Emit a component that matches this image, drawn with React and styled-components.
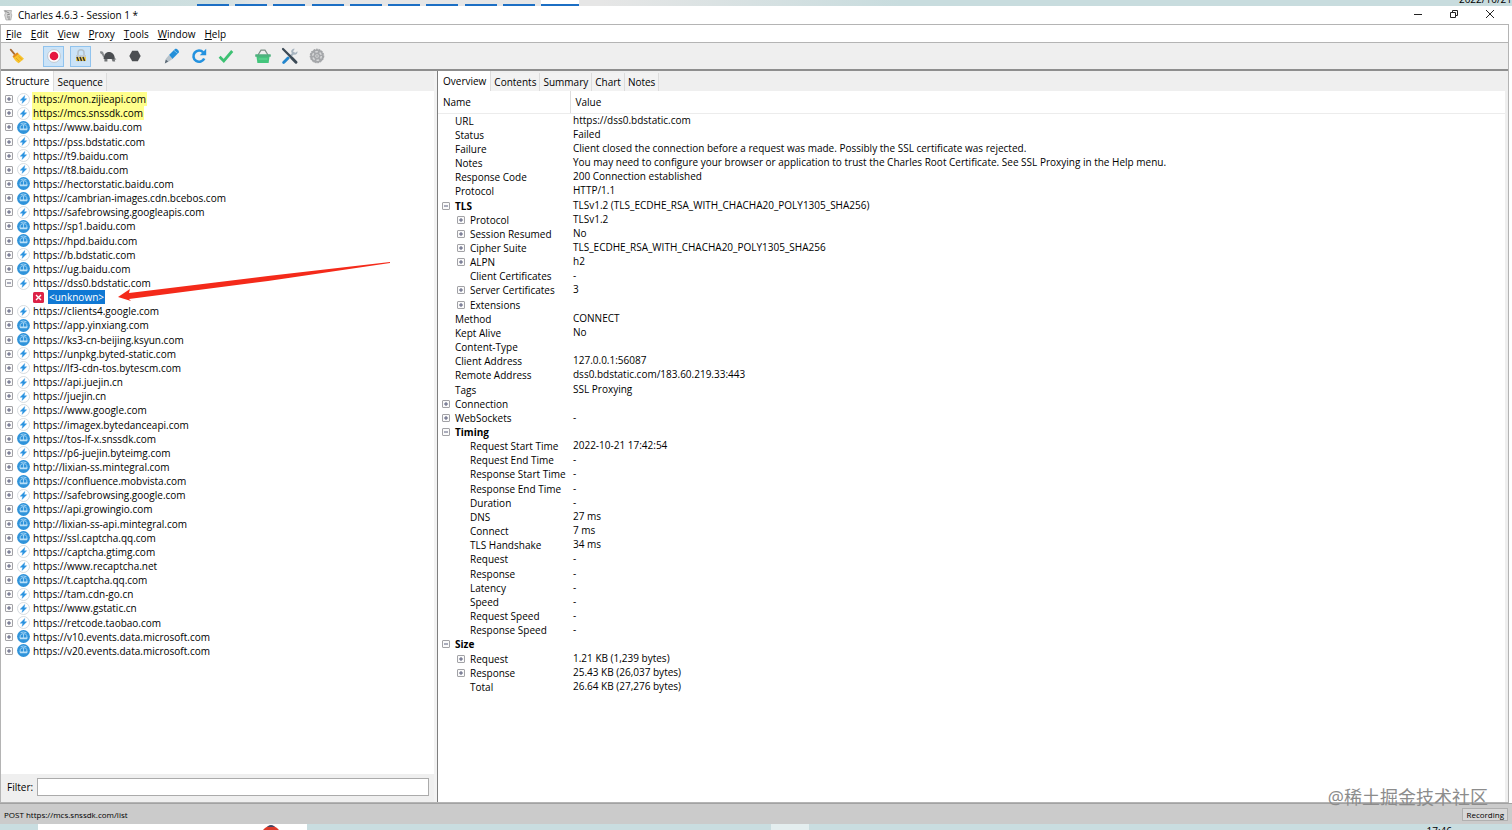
import React from 'react';
import styled, { createGlobalStyle } from 'styled-components';

const GlobalStyle = createGlobalStyle`
  * {
    box-sizing: border-box;
  }
  html, body, #root {
    height: 100%;
    margin: 0;
  }
  body {
    overflow: hidden;
    font-family: 'Open Sans', 'Noto Sans CJK SC', sans-serif;
    font-size: 10px;
    color: #000;
  }
  button, input {
    font: inherit;
    color: inherit;
  }
`;

const hosts = [
  { url: 'https://mon.zijieapi.com', marked: true },
  { url: 'https://mcs.snssdk.com', marked: true },
  { url: 'https://www.baidu.com', globe: true },
  { url: 'https://pss.bdstatic.com' },
  { url: 'https://t9.baidu.com' },
  { url: 'https://t8.baidu.com' },
  { url: 'https://hectorstatic.baidu.com', globe: true },
  { url: 'https://cambrian-images.cdn.bcebos.com', globe: true },
  { url: 'https://safebrowsing.googleapis.com' },
  { url: 'https://sp1.baidu.com', globe: true },
  { url: 'https://hpd.baidu.com', globe: true },
  { url: 'https://b.bdstatic.com' },
  { url: 'https://ug.baidu.com', globe: true },
  { url: 'https://dss0.bdstatic.com', open: true },
  { url: '<unknown>', failed: true },
  { url: 'https://clients4.google.com' },
  { url: 'https://app.yinxiang.com', globe: true },
  { url: 'https://ks3-cn-beijing.ksyun.com', globe: true },
  { url: 'https://unpkg.byted-static.com' },
  { url: 'https://lf3-cdn-tos.bytescm.com' },
  { url: 'https://api.juejin.cn' },
  { url: 'https://juejin.cn' },
  { url: 'https://www.google.com' },
  { url: 'https://imagex.bytedanceapi.com' },
  { url: 'https://tos-lf-x.snssdk.com', globe: true },
  { url: 'https://p6-juejin.byteimg.com' },
  { url: 'http://lixian-ss.mintegral.com', globe: true },
  { url: 'https://confluence.mobvista.com', globe: true },
  { url: 'https://safebrowsing.google.com' },
  { url: 'https://api.growingio.com', globe: true },
  { url: 'http://lixian-ss-api.mintegral.com', globe: true },
  { url: 'https://ssl.captcha.qq.com', globe: true },
  { url: 'https://captcha.gtimg.com' },
  { url: 'https://www.recaptcha.net' },
  { url: 'https://t.captcha.qq.com', globe: true },
  { url: 'https://tam.cdn-go.cn' },
  { url: 'https://www.gstatic.cn' },
  { url: 'https://retcode.taobao.com' },
  { url: 'https://v10.events.data.microsoft.com', globe: true },
  { url: 'https://v20.events.data.microsoft.com', globe: true },
];

// [level, toggle, name, value]
const details = [
  [0, '', 'URL', 'https://dss0.bdstatic.com'],
  [0, '', 'Status', 'Failed'],
  [0, '', 'Failure', 'Client closed the connection before a request was made. Possibly the SSL certificate was rejected.'],
  [0, '', 'Notes', 'You may need to configure your browser or application to trust the Charles Root Certificate. See SSL Proxying in the Help menu.'],
  [0, '', 'Response Code', '200 Connection established'],
  [0, '', 'Protocol', 'HTTP/1.1'],
  [0, '-', 'TLS', 'TLSv1.2 (TLS_ECDHE_RSA_WITH_CHACHA20_POLY1305_SHA256)'],
  [1, '+', 'Protocol', 'TLSv1.2'],
  [1, '+', 'Session Resumed', 'No'],
  [1, '+', 'Cipher Suite', 'TLS_ECDHE_RSA_WITH_CHACHA20_POLY1305_SHA256'],
  [1, '+', 'ALPN', 'h2'],
  [1, '', 'Client Certificates', '-'],
  [1, '+', 'Server Certificates', '3'],
  [1, '+', 'Extensions', ''],
  [0, '', 'Method', 'CONNECT'],
  [0, '', 'Kept Alive', 'No'],
  [0, '', 'Content-Type', ''],
  [0, '', 'Client Address', '127.0.0.1:56087'],
  [0, '', 'Remote Address', 'dss0.bdstatic.com/183.60.219.33:443'],
  [0, '', 'Tags', 'SSL Proxying'],
  [0, '+', 'Connection', ''],
  [0, '+', 'WebSockets', '-'],
  [0, '-', 'Timing', ''],
  [1, '', 'Request Start Time', '2022-10-21 17:42:54'],
  [1, '', 'Request End Time', '-'],
  [1, '', 'Response Start Time', '-'],
  [1, '', 'Response End Time', '-'],
  [1, '', 'Duration', '-'],
  [1, '', 'DNS', '27 ms'],
  [1, '', 'Connect', '7 ms'],
  [1, '', 'TLS Handshake', '34 ms'],
  [1, '', 'Request', '-'],
  [1, '', 'Response', '-'],
  [1, '', 'Latency', '-'],
  [1, '', 'Speed', '-'],
  [1, '', 'Request Speed', '-'],
  [1, '', 'Response Speed', '-'],
  [0, '-', 'Size', ''],
  [1, '+', 'Request', '1.21 KB (1,239 bytes)'],
  [1, '+', 'Response', '25.43 KB (26,037 bytes)'],
  [1, '', 'Total', '26.64 KB (27,276 bytes)'],
];

const menus = ['File', 'Edit', 'View', 'Proxy', 'Tools', 'Window', 'Help'];
const infoTabs = ['Overview', 'Contents', 'Summary', 'Chart', 'Notes'];

const BoltIcon = () => (
  <svg width="13" height="13" viewBox="0 0 13 13">
    <circle cx="6.5" cy="6.5" r="6" fill="#fff" stroke="#cdd3d8" strokeWidth="0.8" />
    <path d="M7.8 2.6 3.2 7.2h2.5l-.6 3.2 4.6-4.7H7.2z" fill="#2b93e0" stroke="#2b93e0" strokeWidth="0.4" />
  </svg>
);

const GlobeIcon = () => (
  <svg width="13" height="13" viewBox="0 0 13 13">
    <circle cx="6.5" cy="6.5" r="6.4" fill="#2f93da" />
    <path d="M3.6 2.6 6.5 2l3 .8M3.2 8V5.4L5 3.8h3.4l1.4 1.8V8M6.5 4v4.4" fill="none" stroke="#a9d7f5" strokeWidth="0.9" />
    <path d="M2.4 7.4h8.4l-.8 1.8H3.2z" fill="#b9dff7" />
  </svg>
);

const FailedIcon = () => (
  <svg width="11" height="11" viewBox="0 0 11 11">
    <rect width="11" height="11" rx="1.5" fill="#dc2347" />
    <path d="m3 3 5 5M8 3 3 8" stroke="#fff" strokeWidth="1.4" />
  </svg>
);

const ToggleIcon = ({ open }) => (
  <svg width="8" height="8" viewBox="0 0 8 8">
    <rect x="0.5" y="0.5" width="7" height="7" rx="0.5" fill="#fafafa" stroke="#a2a2a6" />
    <path d={open ? 'M2 4h4' : 'M2 4h4M4 2v4'} stroke="#4b4f70" strokeWidth="0.9" />
  </svg>
);

const JarIcon = () => (
  <svg width="10" height="12" viewBox="0 0 10 12">
    <path d="M1 1.5h7.5L8 4l.8 2-1 5H3L1.6 6 2.5 4z" fill="#d4d4d4" stroke="#a4a4a4" strokeWidth="0.7" />
    <path d="m2 2 4 2M4 6l3-1M4 8h3M5 10h2" stroke="#777" strokeWidth="0.8" />
  </svg>
);

const BroomIcon = () => (
  <svg width="18" height="18" viewBox="0 0 18 18">
    <path d="m2.7 2.6 4.4 5.2" stroke="#a86d35" strokeWidth="1.8" strokeLinecap="round" />
    <path d="m4.6 9.2 4.6-3.6 6.8 6.2-5.4 4.4c-2.2-1.6-4.6-3.6-6-7z" fill="#f8c32d" />
    <path d="m4.6 9.2 4.6-3.6 1.4 1.3-4.8 3.8z" fill="#e58b1f" />
    <path d="m8 11 3.6 3.6M10.4 9.2l3.8 3.6" stroke="#dea21b" strokeWidth="0.8" />
  </svg>
);

const RecordIcon = () => (
  <svg width="18" height="18" viewBox="0 0 18 18">
    <circle cx="9" cy="9" r="6.4" fill="#fff" stroke="#b6bcc4" strokeWidth="0.8" />
    <circle cx="9" cy="9" r="4.3" fill="#e6173f" />
  </svg>
);

const LockIcon = () => (
  <svg width="18" height="18" viewBox="0 0 18 18">
    <path d="M6 8V5.8a3 3 0 0 1 6 0V8" fill="none" stroke="#b3c0ca" strokeWidth="1.5" />
    <rect x="4" y="8" width="10" height="2" fill="#c3ccd2" />
    <rect x="4" y="10" width="10" height="4" fill="#f0cd4e" />
    <path d="m5 10 1.6 4M8 10l1.6 4M11 10l1.6 4" stroke="#333" strokeWidth="1.5" />
  </svg>
);

const TurtleIcon = () => (
  <svg width="18" height="18" viewBox="0 0 18 18">
    <path d="M4.6 12c0-4.6 2.4-7 5.4-7s5.8 2.4 5.8 7z" fill="#4b4e51" />
    <path d="M1 4.6c1.6-1 3.4 0 3.4 1.4l1.2 2.4-1.2 2L2.8 7.2C1.8 7.2.8 6 1 4.6z" fill="#888b8d" />
    <path d="M5.4 12h3v2.4h-3zM12.6 12h3l.6 2.4h-2.6zM15.4 10.6l2 1.8h-2z" fill="#6f7274" />
  </svg>
);

const HexIcon = () => (
  <svg width="18" height="18" viewBox="0 0 18 18">
    <path d="M6.2 3.8h5.6l2.9 5.2-2.9 5.2H6.2L3.3 9z" fill="#4c4f52" />
  </svg>
);

const PenIcon = () => (
  <svg width="18" height="18" viewBox="0 0 18 18">
    <path d="m6 8 6-6c1.4-.8 4.6 1.6 3.8 3.6L9.4 12z" fill="#238fd9" />
    <path d="m6 8 3.4 4-3.2 2.2L1.8 16.4l1.2-4.9z" fill="#b8c3cb" />
    <path d="m1.8 16.4 1-3.8 2.4 1.8z" fill="#596773" />
    <path d="m11 3.4 3.5 3" stroke="#7ac0ee" />
  </svg>
);

const RepeatIcon = () => (
  <svg width="18" height="18" viewBox="0 0 18 18">
    <path d="M13.2 5.4A5.6 5.6 0 1 0 14.2 11.4" fill="none" stroke="#2492df" strokeWidth="2.6" />
    <path d="M16.2 1.8v6.4H9.8z" fill="#2492df" />
  </svg>
);

const CheckIcon = () => (
  <svg width="18" height="18" viewBox="0 0 18 18">
    <path d="m2.6 9.8 4.2 4.2L15.2 4" fill="none" stroke="#3dc173" strokeWidth="2.8" />
  </svg>
);

const BasketIcon = () => (
  <svg width="18" height="18" viewBox="0 0 18 18">
    <path d="M4 8 7 3.2h4L14 8" fill="none" stroke="#7d8f86" strokeWidth="1.2" />
    <path d="M2.4 9h13.2l-1 7H3.4z" fill="#43c57c" />
    <rect x="1.2" y="7.2" width="15.6" height="2.6" rx="0.6" fill="#4fb07e" />
    <path d="M4.6 12h8.8" stroke="#7fdda8" strokeWidth="0.7" />
  </svg>
);

const ToolsIcon = () => (
  <svg width="18" height="18" viewBox="0 0 18 18">
    <path d="m3.6 15 9-9" stroke="#a9b6c1" strokeWidth="2.2" strokeLinecap="round" />
    <path d="M16.4 4.2 14 6 12 4.5l1.8-2.7c-2.2-.5-4.2 1.7-3.4 3.6l2.2 2.2c2.6.6 4.4-1.3 3.8-3.4z" fill="#a9b6c1" />
    <path d="m2 2 7.6 7.6" stroke="#3c4a56" strokeWidth="2.2" strokeLinecap="round" />
    <path d="m10.6 10.8 4.4 4.4" stroke="#3c4a56" strokeWidth="3" strokeLinecap="round" />
    <path d="m2.6 15.4 4.4-4.4" stroke="#2387cf" strokeWidth="2.8" strokeLinecap="round" />
  </svg>
);

const GearIcon = () => (
  <svg width="18" height="18" viewBox="0 0 18 18">
    <circle cx="9" cy="9" r="6.8" fill="#a5a7aa" stroke="#999b9e" strokeDasharray="1.8 1" />
    <circle cx="9" cy="9" r="4.3" fill="none" stroke="#d7d8d9" strokeWidth="1.5" strokeDasharray="2.6 1.9" />
    <circle cx="9" cy="9" r="1.8" fill="#d7d8d9" />
    <circle cx="9" cy="9" r="0.8" fill="#8d8f92" />
  </svg>
);

const tools = [
  { name: 'Clear session', icon: <BroomIcon />, last: true },
  { name: 'Stop recording', icon: <RecordIcon />, on: true },
  { name: 'SSL proxying', icon: <LockIcon />, on: true },
  { name: 'Throttling', icon: <TurtleIcon /> },
  { name: 'Breakpoints', icon: <HexIcon />, last: true },
  { name: 'Compose', icon: <PenIcon /> },
  { name: 'Repeat', icon: <RepeatIcon /> },
  { name: 'Validate', icon: <CheckIcon />, last: true },
  { name: 'Purchase', icon: <BasketIcon /> },
  { name: 'Tools', icon: <ToolsIcon /> },
  { name: 'Settings', icon: <GearIcon /> },
];

const App = () => {
  return (
    <Desktop>
      <GlobalStyle />
      <TopStrip>
        <Tasks>
          {Array.from({ length: 10 }, (_, i) => (
            <Task key={i} $active={i === 9} />
          ))}
        </Tasks>
        <TopClock>2022/10/21</TopClock>
      </TopStrip>
      <TitleBar>
        <JarIcon />
        <Title>Charles 4.6.3 - Session 1 *</Title>
        <WindowButton aria-label="Minimize">
          <svg width="10" height="10" viewBox="0 0 10 10">
            <path d="M1 5.5h8" stroke="#222" />
          </svg>
        </WindowButton>
        <WindowButton aria-label="Restore">
          <svg width="10" height="10" viewBox="0 0 10 10">
            <path d="M1.5 3.5h5v5h-5zM3.5 3.5v-2h5v5h-2" fill="none" stroke="#222" />
          </svg>
        </WindowButton>
        <WindowButton aria-label="Close">
          <svg width="10" height="10" viewBox="0 0 10 10">
            <path d="m1 1 8 8M9 1 1 9" stroke="#222" />
          </svg>
        </WindowButton>
      </TitleBar>
      <Frame>
        <MenuBar>
          {menus.map((menu) => (
            <MenuButton key={menu}>
              <u>{menu[0]}</u>
              {menu.slice(1)}
            </MenuButton>
          ))}
        </MenuBar>
        <ToolBar>
          {tools.map((tool) => (
            <ToolButton
              key={tool.name}
              aria-label={tool.name}
              $on={tool.on}
              $last={tool.last}
            >
              {tool.icon}
            </ToolButton>
          ))}
        </ToolBar>
        <Panes>
          <LeftPane>
            <Tabs>
              <Tab $active>Structure</Tab>
              <Tab>Sequence</Tab>
            </Tabs>
            <TreeArea>
              <Tree>
                {hosts.map((host) => (
                  <TreeRow key={host.url} $child={host.failed}>
                    {!host.failed && <ToggleIcon open={host.open} />}
                    {host.failed ? (
                      <FailedIcon />
                    ) : host.globe ? (
                      <GlobeIcon />
                    ) : (
                      <BoltIcon />
                    )}
                    <HostName $marked={host.marked} $selected={host.failed}>
                      {host.url}
                    </HostName>
                  </TreeRow>
                ))}
              </Tree>
              <Arrow width="272" height="40" viewBox="0 0 272 40">
                <path d="M272 0 150 14 11 31 12 27 0 35 13 39 11 37 150 19 272 1z" fill="#f42a1a" />
              </Arrow>
            </TreeArea>
            <FilterBar>
              <label htmlFor="filter">Filter:</label>
              <FilterInput id="filter" type="text" />
            </FilterBar>
          </LeftPane>
          <RightPane>
            <Tabs>
              {infoTabs.map((tab, i) => (
                <Tab key={tab} $active={i === 0}>
                  {tab}
                </Tab>
              ))}
            </Tabs>
            <Info>
              <InfoTable>
                <thead>
                  <tr>
                    <HeadCell $name>Name</HeadCell>
                    <HeadCell>Value</HeadCell>
                  </tr>
                </thead>
                <tbody>
                  {details.map(([level, toggle, name, value], i) => (
                    <tr key={i}>
                      <NameCell $bold={toggle === '-'}>
                        <NameInner $level={level}>
                          <ToggleSlot>
                            {toggle && <ToggleIcon open={toggle === '-'} />}
                          </ToggleSlot>
                          {name}
                        </NameInner>
                      </NameCell>
                      <ValueCell>{value}</ValueCell>
                    </tr>
                  ))}
                </tbody>
              </InfoTable>
            </Info>
          </RightPane>
        </Panes>
      </Frame>
      <StatusBar>
        <span>POST https://mcs.snssdk.com/list</span>
        <Recording>Recording</Recording>
      </StatusBar>
      <BottomStrip>
        <BottomWindow>
          <svg width="22" height="6" viewBox="0 0 22 6">
            <path d="M2 6q8-9 16 0z" fill="#dc3a2b" />
            <path d="M6 3q4-4 8 0z" fill="#3d4868" />
          </svg>
        </BottomWindow>
        <BottomTile />
        <BottomClock>17:46</BottomClock>
      </BottomStrip>
      <Watermark>@稀土掘金技术社区</Watermark>
    </Desktop>
  );
};

export default App;

const Desktop = styled.div`
  position: relative;
  height: 100vh;
  display: flex;
  flex-direction: column;
  background: #fff;
`;

const TopStrip = styled.div`
  height: 6px;
  flex: none;
  display: flex;
  justify-content: space-between;
  overflow: hidden;
  padding-left: 197px;
  background: linear-gradient(90deg, #c5dcdc 0, #cfdfe0 220px, #e6e6e6 260px, #e6e6e6 600px, #c8dcde 900px);
`;

const Tasks = styled.div`
  width: 382px;
  display: flex;
  justify-content: space-between;
`;

const Task = styled.div`
  width: ${({ $active }) => ($active ? 38 : 32)}px;
  background: ${({ $active }) => ($active ? '#fff' : 'transparent')};
  border-bottom: 2px solid #1c6fc4;
`;

const TopClock = styled.div`
  line-height: 14px;
  margin-top: -8px;
`;

const TitleBar = styled.header`
  height: 18px;
  flex: none;
  display: flex;
  align-items: center;
  padding: 0 4px 0 3px;
  background: #fff;
`;

const Title = styled.div`
  flex: 1;
  padding-left: 5px;
`;

const WindowButton = styled.button`
  width: 36px;
  height: 18px;
  padding: 0;
  border: 0;
  background: none;
`;

const Frame = styled.div`
  flex: 1;
  min-height: 0;
  display: flex;
  flex-direction: column;
  margin-right: 3px;
  border: 1px solid #b4b4b4;
  background: #efefef;
`;

const MenuBar = styled.nav`
  height: 17px;
  flex: none;
  display: flex;
  gap: 9px;
  padding-left: 5px;
  background: #fff;
`;

const MenuButton = styled.button`
  padding: 0;
  border: 0;
  background: none;
  line-height: 18px;
`;

const ToolBar = styled.div`
  height: 27px;
  flex: none;
  display: flex;
  align-items: center;
  gap: 6px;
  padding-left: 5px;
  border-top: 1px solid #b4b4b4;
`;

const ToolButton = styled.button`
  width: 21px;
  height: 21px;
  display: grid;
  place-items: center;
  padding: 0;
  margin-right: ${({ $last }) => ($last ? 10 : 0)}px;
  border: 1px solid ${({ $on }) => ($on ? '#90c3ee' : 'transparent')};
  background: ${({ $on }) => ($on ? '#cbe3f7' : 'none')};
`;

const Panes = styled.main`
  flex: 1;
  min-height: 0;
  display: flex;
  border-top: 2px solid #8e8e8e;
`;

const LeftPane = styled.section`
  width: 436px;
  flex: none;
  display: flex;
  flex-direction: column;
  padding-bottom: 2px;
  border-right: 3px solid #f2f2f2;
`;

const RightPane = styled.section`
  flex: 1;
  min-width: 0;
  display: flex;
  flex-direction: column;
  border-left: 1px solid #7e7e7e;
`;

const Tabs = styled.div`
  height: 20px;
  flex: none;
  display: flex;
  align-items: flex-end;
`;

const Tab = styled.button`
  height: ${({ $active }) => ($active ? 20 : 18)}px;
  padding: ${({ $active }) => ($active ? '0 4px 0 5px' : '0 3px')};
  border: 0;
  border-right: 1px solid #dcdcdc;
  background: ${({ $active }) => ($active ? '#fff' : '#f2f2f2')};
`;

const TreeArea = styled.div`
  position: relative;
  flex: 1;
  min-height: 0;
  overflow: hidden;
  background: #fff;
`;

const Tree = styled.ul`
  height: 567px;
  display: grid;
  grid-auto-rows: 1fr;
  margin: 0;
  padding: 1px 0 0 4px;
  list-style: none;
`;

const TreeRow = styled.li`
  min-height: 0;
  display: grid;
  grid-template-columns: ${({ $child }) => ($child ? '15px auto' : '12px 15px auto')};
  justify-content: start;
  align-items: center;
  padding-left: ${({ $child }) => ($child ? 28 : 0)}px;
  line-height: 14px;
`;

const HostName = styled.span`
  padding: 0 1px;
  background: ${({ $marked, $selected }) =>
    $selected ? '#0f78d4' : $marked ? '#ffff8c' : 'none'};
  color: ${({ $selected }) => ($selected ? '#fff' : 'inherit')};
`;

const Arrow = styled.svg`
  position: absolute;
  left: 117px;
  top: 171px;
`;

const FilterBar = styled.div`
  height: 26px;
  flex: none;
  display: flex;
  align-items: center;
  gap: 4px;
  padding: 0 5px 0 6px;
`;

const FilterInput = styled.input`
  flex: 1;
  height: 18px;
  border: 1px solid #ababab;
  background: #fff;
`;

const Info = styled.div`
  flex: 1;
  min-height: 0;
  overflow: hidden;
  margin-right: 3px;
  background: #fff;
`;

const InfoTable = styled.table`
  width: 100%;
  height: 603px;
  table-layout: fixed;
  border-collapse: collapse;
`;

const HeadCell = styled.th`
  width: ${({ $name }) => ($name ? '132px' : 'auto')};
  height: 22px;
  padding: 0 5px;
  border-right: ${({ $name }) => ($name ? '1px solid #dedede' : '0')};
  border-bottom: 1px solid #ececec;
  text-align: left;
  font-weight: normal;
`;

const NameCell = styled.td`
  padding: 0;
  line-height: 14px;
  font-weight: ${({ $bold }) => ($bold ? 'bold' : 'normal')};
`;

const NameInner = styled.div`
  display: flex;
  align-items: center;
  padding-left: ${({ $level }) => 4 + $level * 15}px;
`;

const ToggleSlot = styled.span`
  width: 13px;
  display: flex;
`;

const ValueCell = styled.td`
  padding: 0 3px 2px;
  line-height: 12px;
  white-space: nowrap;
`;

const StatusBar = styled.footer`
  height: 21px;
  flex: none;
  display: flex;
  align-items: center;
  justify-content: space-between;
  padding: 0 4px;
  border-top: 1px solid #a2a2a2;
  font-size: 8px;
  background: #cbcbcb;
`;

const Recording = styled.span`
  padding: 0 3px;
  border: 1px solid #b0b0b0;
  background: #d8d8d8;
  line-height: 11px;
`;

const BottomStrip = styled.div`
  height: 6px;
  flex: none;
  display: flex;
  overflow: hidden;
  padding-left: 38px;
  background: #c9dde0;
`;

const BottomWindow = styled.div`
  width: 269px;
  padding-right: 24px;
  text-align: right;
  line-height: 0;
  background: #fff;
`;

const BottomTile = styled.div`
  width: 38px;
  margin-left: 464px;
  background: #e4eeef;
`;

const BottomClock = styled.div`
  margin-left: auto;
  padding-right: 60px;
  line-height: 14px;
`;

const Watermark = styled.div`
  position: absolute;
  right: 24px;
  bottom: 21px;
  font-size: 18px;
  line-height: 24px;
  color: #8c8c8c;
`;
